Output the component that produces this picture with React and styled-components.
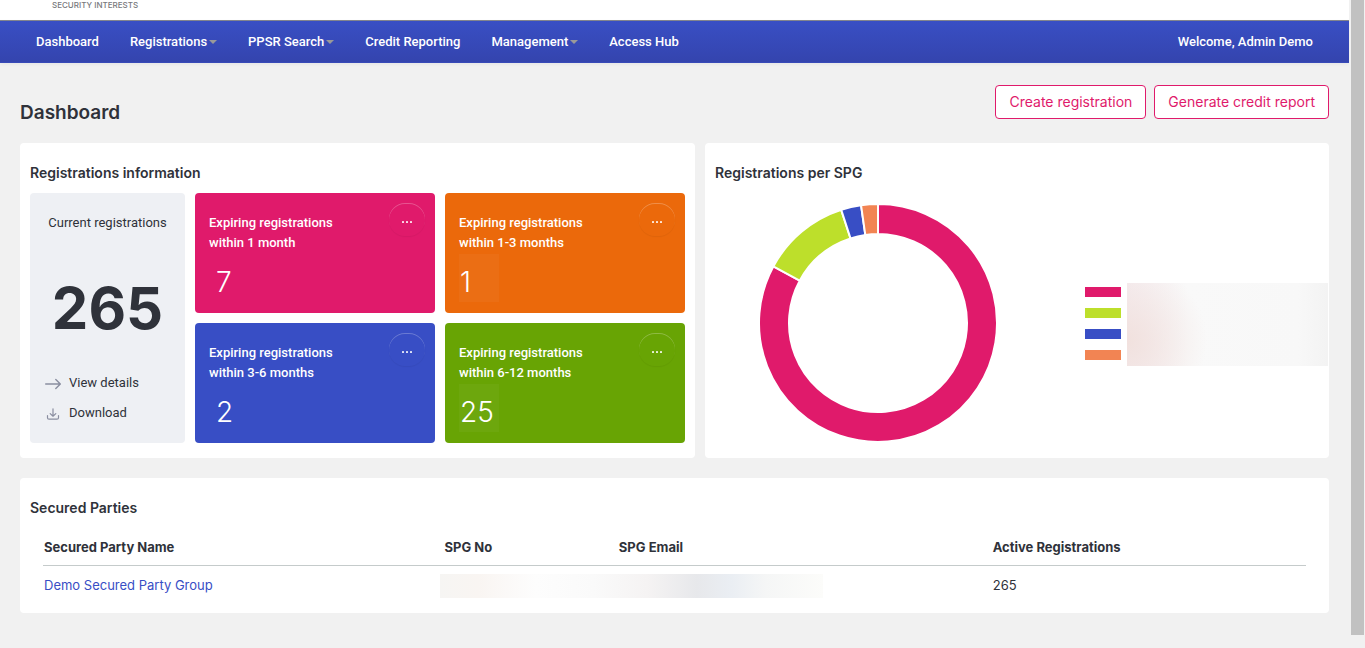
import React from "react";
import styled, { createGlobalStyle } from "styled-components";

const GlobalStyle = createGlobalStyle`
  * {
    box-sizing: border-box;
  }
  body {
    margin: 0;
    background: #f1f1f1;
    color: #2f323a;
    font-family: Inter, "Liberation Sans", sans-serif;
    font-size: 13px;
    line-height: 20px;
  }
  h1, h2, p {
    margin: 0;
  }
  a {
    color: inherit;
    text-decoration: none;
  }
  button {
    font: inherit;
    cursor: pointer;
  }
`;

const Shell = styled.div`
  display: flex;
  min-height: 100vh;
`;

const Page = styled.div`
  flex: 1;
  min-width: 0;
`;

const ScrollTrack = styled.div`
  width: 16px;
  padding: 0 1px 0 2px;
  background: #f1f1f1;
`;

const ScrollThumb = styled.div`
  height: calc(100vh - 13px);
  background: #c1c1c1;
`;

const LogoBar = styled.header`
  height: 21px;
  padding-left: 52px;
  background: #ffffff;
  border-bottom: 1px solid #85878f;
  color: #77787c;
  font-size: 8px;
  font-weight: 500;
  line-height: 11px;
`;

const Nav = styled.nav`
  display: flex;
  align-items: center;
  gap: 31px;
  height: 42px;
  padding: 0 36px;
  background: linear-gradient(#394fc4, #3444ae);
  border-bottom: 1px solid #384ab8;
  box-shadow: 0 1px 4px rgba(0, 0, 0, 0.06);
  color: #ffffff;
  font-family: Roboto, "Liberation Sans", sans-serif;
  font-weight: 500;
`;

const NavLink = styled.a`
  display: flex;
  align-items: center;
  gap: 2px;
`;

const Caret = styled.span`
  border: 4px solid transparent;
  border-top-color: #999999;
  border-bottom: 0;
`;

const Welcome = styled.a`
  margin-left: auto;
`;

const Content = styled.main`
  display: flex;
  flex-direction: column;
  padding: 22px 20px 35px;
`;

const TitleRow = styled.div`
  display: flex;
  justify-content: space-between;
  margin-bottom: 18px;
`;

const Title = styled.h1`
  padding-top: 16px;
  font-size: 19px;
  font-weight: 600;
  line-height: 24px;
`;

const Actions = styled.div`
  display: flex;
  align-items: flex-start;
  gap: 8px;
`;

const OutlineButton = styled.button`
  height: 34px;
  padding: 0 13px;
  background: #ffffff;
  border: 1px solid #e01a6b;
  border-radius: 4px;
  color: #e01a6b;
  font-size: 14px;
`;

const Panels = styled.div`
  display: grid;
  grid-template-columns: auto 1fr;
  gap: 10px;
  margin-bottom: 20px;
`;

const Panel = styled.section`
  padding: 20px 10px 15px;
  background: #ffffff;
  border-radius: 4px;
`;

const PanelTitle = styled.h2`
  margin-bottom: 10px;
  font-size: 14px;
  font-weight: 600;
  line-height: 20px;
`;

const Tiles = styled.div`
  display: grid;
  grid-template-columns: 155px 240px 240px;
  grid-template-rows: 120px 120px;
  gap: 10px;
  font-family: Roboto, "Liberation Sans", sans-serif;
`;

const CurrentTile = styled.div`
  grid-row: span 2;
  display: flex;
  flex-direction: column;
  padding: 20px 15px;
  background: #eef0f4;
  border-radius: 4px;
`;

const CurrentLabel = styled.p`
  text-align: center;
  white-space: nowrap;
`;

const CurrentCount = styled.p`
  margin: auto 0;
  padding-top: 20px;
  font-family: Inter, "Liberation Sans", sans-serif;
  font-size: 58px;
  font-weight: 700;
  line-height: 60px;
  text-align: center;
`;

const TileLink = styled.a`
  display: flex;
  align-items: center;
  gap: 8px;
  height: 20px;
  margin-top: 10px;

  svg {
    margin-top: 2px;
  }
`;

const Tile = styled.div`
  display: flex;
  justify-content: space-between;
  padding: 10px 10px 10px 14px;
  background: ${(props) => props.$color};
  border-radius: 4px;
  color: #ffffff;
  font-weight: 500;
`;

const TileLabel = styled.p`
  padding-top: 10px;
  white-space: pre-line;
`;

const TileCount = styled.p`
  width: 40px;
  height: 48px;
  margin-top: 1px;
  padding-left: ${(props) => (props.$boxed ? 1 : 7)}px;
  background: ${(props) => (props.$boxed ? "rgba(255, 255, 255, 0.04)" : "none")};
  font-family: Inter, "Liberation Sans", sans-serif;
  font-size: 28px;
  font-weight: 300;
  line-height: 56px;
`;

const MoreButton = styled.button`
  width: 36px;
  height: 33px;
  padding: 0;
  background: none;
  border: 0;
  border-radius: 16px;
  box-shadow: inset 0 1px 0 rgba(255, 255, 255, 0.25), 0 1px 1px rgba(0, 0, 0, 0.05);
  color: rgba(255, 255, 255, 0.85);

  svg {
    display: block;
    margin: 4px auto 0;
  }
`;

const ChartPanel = styled(Panel)`
  padding-right: 1px;
`;

const ChartRow = styled.div`
  display: flex;
  align-items: center;
  padding: 11px 0 0 44px;
`;

const Legend = styled.ul`
  display: grid;
  gap: 11px;
  margin: 0 6px 0 88px;
  padding: 0;
  list-style: none;
`;

const Swatch = styled.li`
  width: 36px;
  height: 10px;
  background: ${(props) => props.$color};
`;

const HiddenNames = styled.div`
  flex: 1;
  height: 83px;
  margin-top: 2px;
  background: radial-gradient(ellipse 80px 80px at 0 70%, #f1e1de, transparent),
    linear-gradient(90deg, #f5edf0, #f9f9f9 30%, #f8f8f8 85%, #f3f3f3);
`;

const TableWrap = styled.div`
  padding: 0 13px;
`;

const Table = styled.table`
  width: 100%;
  border-collapse: collapse;
  table-layout: fixed;
  text-align: left;

  th {
    padding: 9px 5px 8px;
    border-bottom: 1px solid #c5cbcb;
    font-weight: 700;
  }
  td {
    padding: 9px 5px 3px;
  }
  th:first-child,
  td:first-child {
    padding-left: 1px;
  }
`;

const Col = styled.col`
  width: ${(props) => props.$width};
`;

const HiddenCell = styled.td`
  && {
    padding: 0;
    vertical-align: bottom;
  }
`;

const HiddenValue = styled.div`
  width: 70%;
  height: 24px;
  background: linear-gradient(
    90deg,
    #f6f5f3,
    #f9f5f2 10%,
    #fdfdfd 25%,
    #fafafa 40%,
    #f5f3f3 54%,
    #e7e8eb 67%,
    #eaeef3 76%,
    #f5f6f6 85%,
    #fcfcfa
  );
`;

const PartyLink = styled.a`
  color: #384ec5;
`;

const navItems = [
  { label: "Dashboard" },
  { label: "Registrations", menu: true },
  { label: "PPSR Search", menu: true },
  { label: "Credit Reporting" },
  { label: "Management", menu: true },
  { label: "Access Hub" },
];

const tiles = [
  { label: "within 1 month", count: 7, color: "#e01a6b" },
  { label: "within 1-3 months", count: 1, color: "#eb690b", boxed: true },
  { label: "within 3-6 months", count: 2, color: "#384ec5" },
  { label: "within 6-12 months", count: 25, color: "#68a404", boxed: true },
];

// start and end are degrees clockwise from the top
const slices = [
  { color: "#e01a6b", start: 0, end: 298.4 },
  { color: "#bddf2b", start: 298.4, end: 342 },
  { color: "#384ec5", start: 342, end: 351.8 },
  { color: "#f28453", start: 351.8, end: 360 },
];

function point(radius, degrees) {
  const angle = (degrees * Math.PI) / 180;
  return `${119 + radius * Math.sin(angle)} ${119 - radius * Math.cos(angle)}`;
}

function slicePath({ start, end }) {
  const large = end - start > 180 ? 1 : 0;
  return `M${point(119, start)} A119 119 0 ${large} 1 ${point(119, end)} L${point(89, end)} A89 89 0 ${large} 0 ${point(89, start)} Z`;
}

function Donut() {
  return (
    <svg width="238" height="238" viewBox="0 0 238 238" role="img" aria-label="Registrations per SPG">
      {slices.map((slice) => (
        <path key={slice.color} d={slicePath(slice)} fill={slice.color} stroke="#fff" strokeWidth="2" />
      ))}
    </svg>
  );
}

function ArrowIcon() {
  return (
    <svg width="16" height="12" viewBox="0 0 16 12" fill="none" stroke="#8a8ea0" strokeWidth="1.4" strokeLinecap="round" strokeLinejoin="round">
      <path d="M.7 6h14.4M10.8 1.5 15.3 6l-4.5 4.5" />
    </svg>
  );
}

function DownloadIcon() {
  return (
    <svg width="16" height="12" viewBox="0 0 16 12" fill="none" stroke="#8a8ea0" strokeWidth="1.2" strokeLinecap="round" strokeLinejoin="round">
      <path d="M8 .8v7.4M5.2 5.6 8 8.2l2.8-2.6M2.5 7.5v2.2q0 1.5 1.5 1.5h8q1.5 0 1.5-1.5V7.5" />
    </svg>
  );
}

function DotsIcon() {
  return (
    <svg width="12" height="2" viewBox="0 0 12 2" fill="currentColor">
      <rect x="1" width="2" height="2" rx=".5" />
      <rect x="5" width="2" height="2" rx=".5" />
      <rect x="9" width="2" height="2" rx=".5" />
    </svg>
  );
}

function Header() {
  return (
    <>
      <LogoBar>SECURITY INTERESTS</LogoBar>
      <Nav>
        {navItems.map((item) => (
          <NavLink href="#" key={item.label}>
            {item.label}
            {item.menu && <Caret />}
          </NavLink>
        ))}
        <Welcome href="#">Welcome, Admin Demo</Welcome>
      </Nav>
    </>
  );
}

function RegistrationsPanel() {
  return (
    <Panel>
      <PanelTitle>Registrations information</PanelTitle>
      <Tiles>
        <CurrentTile>
          <CurrentLabel>Current registrations</CurrentLabel>
          <CurrentCount>265</CurrentCount>
          <TileLink href="#">
            <ArrowIcon />
            View details
          </TileLink>
          <TileLink href="#">
            <DownloadIcon />
            Download
          </TileLink>
        </CurrentTile>
        {tiles.map((tile) => (
          <Tile key={tile.label} $color={tile.color}>
            <div>
              <TileLabel>{`Expiring registrations\n${tile.label}`}</TileLabel>
              <TileCount $boxed={tile.boxed}>{tile.count}</TileCount>
            </div>
            <MoreButton aria-label="More options">
              <DotsIcon />
            </MoreButton>
          </Tile>
        ))}
      </Tiles>
    </Panel>
  );
}

function SpgPanel() {
  return (
    <ChartPanel>
      <PanelTitle>Registrations per SPG</PanelTitle>
      <ChartRow>
        <Donut />
        <Legend>
          {slices.map((slice) => (
            <Swatch key={slice.color} $color={slice.color} />
          ))}
        </Legend>
        <HiddenNames />
      </ChartRow>
    </ChartPanel>
  );
}

function PartiesPanel() {
  return (
    <Panel>
      <PanelTitle>Secured Parties</PanelTitle>
      <TableWrap>
        <Table>
          <colgroup>
            <Col $width="31.4%" />
            <Col $width="13.8%" />
            <Col $width="29.6%" />
            <Col />
          </colgroup>
          <thead>
            <tr>
              <th>Secured Party Name</th>
              <th>SPG No</th>
              <th>SPG Email</th>
              <th>Active Registrations</th>
            </tr>
          </thead>
          <tbody>
            <tr>
              <td>
                <PartyLink href="#">Demo Secured Party Group</PartyLink>
              </td>
              <HiddenCell colSpan={2}>
                <HiddenValue />
              </HiddenCell>
              <td>265</td>
            </tr>
          </tbody>
        </Table>
      </TableWrap>
    </Panel>
  );
}

function App() {
  return (
    <Shell>
      <GlobalStyle />
      <Page>
        <Header />
        <Content>
          <TitleRow>
            <Title>Dashboard</Title>
            <Actions>
              <OutlineButton>Create registration</OutlineButton>
              <OutlineButton>Generate credit report</OutlineButton>
            </Actions>
          </TitleRow>
          <Panels>
            <RegistrationsPanel />
            <SpgPanel />
          </Panels>
          <PartiesPanel />
        </Content>
      </Page>
      <ScrollTrack>
        <ScrollThumb />
      </ScrollTrack>
    </Shell>
  );
}

export default App;
